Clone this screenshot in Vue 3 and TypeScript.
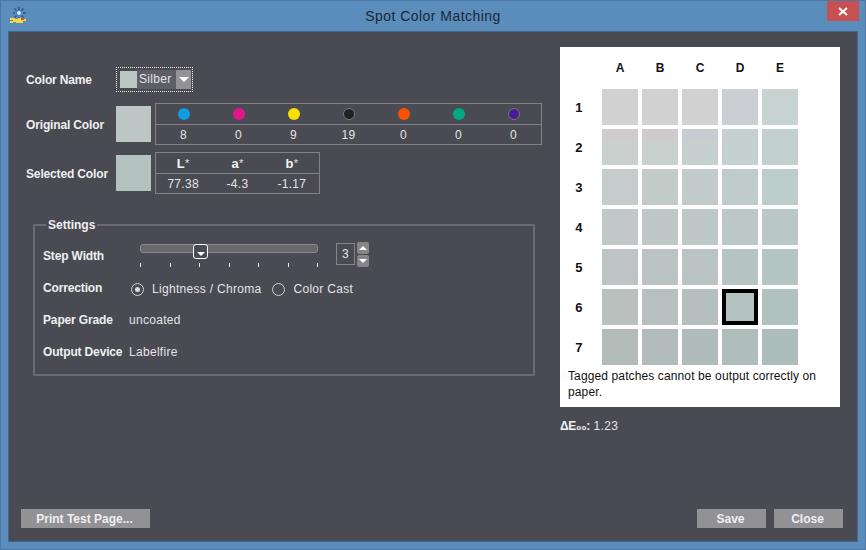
<template>
  <div class="window">
    <header class="titlebar">
      <svg class="app-icon" width="18" height="18" viewBox="0 0 18 18">
        <g stroke="#2f5288" stroke-width="1.4">
          <path d="M10 1v3M10 11v2M4 7h2M14 7h3M5.5 2.5l2 2M14.5 2.5l-2 2M5.5 11.5l2-2M14.5 11.5l-2-2" />
        </g>
        <circle cx="10" cy="7" r="2.6" fill="#cfe8fb" stroke="#3d78b8" />
        <path d="M1 12h5v1h3v-1h5v1h3v2h-3v2H7v-1H4v1H1v-2h3v-1H1z" fill="#f7d93c" />
        <path d="M12 12h3v2h-3z" fill="#d8541e" />
      </svg>
      <span class="title">Spot Color Matching</span>
      <button class="close-x" type="button">
        <svg width="10" height="9" viewBox="0 0 10 9">
          <path d="M1 1l8 7M9 1L1 8" stroke="#fff" stroke-width="2" />
        </svg>
      </button>
    </header>

    <div class="content">
      <div class="main">
        <section class="left">
          <div class="row name-row">
            <span class="label">Color Name</span>
            <div class="combo">
              <span class="combo-swatch"></span>
              <span class="combo-text">Silber</span>
              <span class="combo-arrow"><i class="tri-down"></i></span>
            </div>
          </div>

          <div class="row original-row">
            <span class="label">Original Color</span>
            <span class="swatch original"></span>
            <div class="table inks">
              <div class="cell" v-for="ink in inks" :key="ink.color">
                <span class="dot" :class="{ ring: ink.ring }" :style="{ background: ink.color }"></span>
              </div>
              <div class="cell value" v-for="(ink, i) in inks" :key="i">{{ ink.value }}</div>
            </div>
          </div>

          <div class="row selected-row">
            <span class="label">Selected Color</span>
            <span class="swatch selected"></span>
            <div class="table lab">
              <div class="cell head" v-for="h in labHead" :key="h"><b>{{ h }}</b>*</div>
              <div class="cell value" v-for="v in labValues" :key="v">{{ v }}</div>
            </div>
          </div>

          <fieldset class="settings">
            <legend>Settings</legend>
            <div class="set-row">
              <span class="label">Step Width</span>
              <div class="slider">
                <div class="track">
                  <span class="thumb"><i class="tri-down small"></i></span>
                </div>
                <div class="ticks"><i v-for="n in 7" :key="n"></i></div>
              </div>
              <div class="spinner">
                <span class="spin-value">3</span>
                <div class="spin-buttons">
                  <span class="spin-btn"><i class="tri-up"></i></span>
                  <span class="spin-btn"><i class="tri-down small"></i></span>
                </div>
              </div>
            </div>
            <div class="set-row correction">
              <span class="label">Correction</span>
              <label class="radio first"><span class="radio-mark on"></span>Lightness / Chroma</label>
              <label class="radio"><span class="radio-mark"></span>Color Cast</label>
            </div>
            <div class="set-row">
              <span class="label">Paper Grade</span>
              <span class="text">uncoated</span>
            </div>
            <div class="set-row">
              <span class="label">Output Device</span>
              <span class="text">Labelfire</span>
            </div>
          </fieldset>
        </section>

        <section class="right">
          <div class="panel">
            <div class="grid">
              <span></span>
              <span class="col-head" v-for="c in columns" :key="c">{{ c }}</span>
              <template v-for="(row, r) in patches" :key="r">
                <span class="row-head">{{ r + 1 }}</span>
                <span
                  v-for="(p, c) in row"
                  :key="c"
                  class="patch"
                  :class="{ active: r === 5 && c === 3 }"
                  :style="{ background: patchBg(p) }"
                ></span>
              </template>
            </div>
            <p class="note">Tagged patches cannot be output correctly on paper.</p>
          </div>
          <div class="delta"><b>ΔE₀₀:</b> 1.23</div>
        </section>
      </div>

      <footer class="footer">
        <button class="btn print" type="button">Print Test Page...</button>
        <div class="footer-right">
          <button class="btn" type="button">Save</button>
          <button class="btn" type="button">Close</button>
        </div>
      </footer>
    </div>
  </div>
</template>

<script setup lang="ts">
const inks = [
  { color: '#0f9be0', value: 8 },
  { color: '#e0168a', value: 0 },
  { color: '#f6e100', value: 9 },
  { color: '#222224', value: 19, ring: true },
  { color: '#fb5200', value: 0 },
  { color: '#00ab84', value: 0 },
  { color: '#4a1a9a', value: 0, ring: true },
];

const labHead = ['L', 'a', 'b'];
const labValues = ['77.38', '-4.3', '-1.17'];
const columns = ['A', 'B', 'C', 'D', 'E'];

// a patch is one colour, or "top|bottom" when a tagged strip sits on top
const patches = [
  ['#d2d2d2', '#d2d2d2', '#d2d2d2', '#cbced3', '#c7d3d0'],
  ['#cecccc|#c9d0ce', '#cdcbcb|#c8d1ce', '#c8cbd2|#c6d0ce', '#c5d1ce', '#c2d0ce'],
  ['#c5cccb', '#c3cbc9', '#c2cbc9', '#c0ccca', '#bdcdcb'],
  ['#c1c8c7', '#bfc8c6', '#bdc8c7', '#bbc8c6', '#b9c8c7'],
  ['#bdc4c3', '#bbc4c3', '#b9c4c3', '#b6c5c4', '#b5c5c4'],
  ['#b9c0be', '#b7c0be', '#b5c0be', '#b3c1bf', '#b1c1be'],
  ['#b4bcba', '#b2bcba', '#b0bcba', '#afbdbb', '#adbdbb'],
];

function patchBg(p: string): string {
  const [top, bottom] = p.split('|');
  if (!bottom) return top;
  return `linear-gradient(${top} 11px, ${bottom} 11px)`;
}
</script>

<style scoped>
.window {
  width: 866px;
  height: 550px;
  box-sizing: border-box;
  display: flex;
  flex-direction: column;
  background: #5a8cbc;
  border: 1px solid #4c77a5;
  font-family: "Liberation Sans", Arial, sans-serif;
  font-size: 12px;
  letter-spacing: 0.3px;
  color: #e4e4e6;
}
.titlebar {
  height: 30px;
  flex: none;
  display: flex;
  align-items: flex-start;
  position: relative;
}
.app-icon {
  margin: 5px 0 0 8px;
}
.title {
  position: absolute;
  left: 0;
  right: 0;
  top: 7px;
  text-align: center;
  font-size: 14px;
  letter-spacing: 0.45px;
  color: #1d2733;
}
.close-x {
  margin-left: auto;
  margin-right: 6px;
  width: 32px;
  height: 20px;
  border: none;
  padding: 0;
  background: #c75050;
  display: flex;
  align-items: center;
  justify-content: center;
}
.content {
  flex: 1;
  margin: 0 7px 7px;
  box-sizing: border-box;
  border: 1px solid #43678f;
  background: #4a4a52;
  display: flex;
  flex-direction: column;
  padding: 0 14px 13px 12px;
}
.main {
  flex: 1;
  display: flex;
}
.left {
  width: 539px;
  flex: none;
  padding-top: 35px;
  box-sizing: border-box;
}
.label {
  font-weight: 700;
  color: #efeff0;
  letter-spacing: -0.15px;
}
.row {
  display: flex;
  align-items: center;
  padding-left: 5px;
}
.row .label {
  width: 90px;
  flex: none;
}
.original-row .label,
.selected-row .label {
  padding-top: 2px;
}
.name-row {
  height: 25px;
}
.combo {
  width: 77px;
  height: 25px;
  box-sizing: border-box;
  border: 1px dotted #fff;
  padding: 3px 1px 3px 3px;
  display: flex;
  align-items: center;
}
.combo-swatch {
  width: 17px;
  height: 17px;
  background: #bcc6c4;
  flex: none;
}
.combo-text {
  flex: 1;
  padding-left: 2px;
  background: #5e5e66;
  height: 19px;
  line-height: 19px;
}
.combo-arrow {
  width: 15px;
  height: 19px;
  background: #929297;
  display: flex;
  align-items: center;
  justify-content: center;
  flex: none;
}
.tri-down {
  display: block;
  width: 0;
  height: 0;
  border-left: 5px solid transparent;
  border-right: 5px solid transparent;
  border-top: 5px solid #fff;
}
.tri-down.small {
  border-left-width: 4px;
  border-right-width: 4px;
  border-top-width: 4px;
}
.tri-up {
  display: block;
  width: 0;
  height: 0;
  border-left: 4px solid transparent;
  border-right: 4px solid transparent;
  border-bottom: 4px solid #fff;
}
.swatch {
  width: 35px;
  height: 36px;
  flex: none;
}
.swatch.original {
  background: #bcc6c4;
}
.swatch.selected {
  background: #b3c2be;
}
.original-row {
  margin-top: 11px;
}
.selected-row {
  margin-top: 7px;
}
.table {
  margin-left: 4px;
  border: 1px solid #828286;
  display: grid;
  grid-template-rows: 20px 20px;
  box-sizing: border-box;
}
.inks {
  width: 387px;
  height: 42px;
  grid-template-columns: repeat(7, 1fr);
}
.lab {
  width: 165px;
  height: 42px;
  grid-template-columns: repeat(3, 1fr);
}
.cell {
  display: flex;
  align-items: center;
  justify-content: center;
}
.cell.value {
  border-top: 1px solid #828286;
  height: 20px;
  box-sizing: border-box;
}
.cell.head {
  font-size: 11px;
}
.cell.head b {
  font-size: 13px;
  color: #f4f4f4;
}
.dot {
  width: 12px;
  height: 12px;
  border-radius: 50%;
  box-sizing: border-box;
}
.dot.ring {
  border: 1px solid #77777c;
}
.settings {
  margin: 24px 0 0 12px;
  padding: 0 0 0 8px;
  width: 502px;
  height: 158px;
  box-sizing: border-box;
  border: 2px solid #6b6b73;
}
.settings legend {
  margin-left: 3px;
  padding: 0 2px;
  font-weight: 700;
  letter-spacing: 0;
  color: #efeff0;
}
.set-row {
  height: 32px;
  display: flex;
  align-items: center;
}
.set-row:first-of-type {
  margin-top: 8px;
}
.set-row .label {
  width: 86px;
  flex: none;
}
.slider {
  width: 178px;
  margin: 0 0 0 11px;
  flex: none;
  align-self: flex-start;
}
.track {
  position: relative;
  height: 9px;
  box-sizing: border-box;
  margin-top: 4px;
  border: 1px solid #8a8a8e;
  border-radius: 3px;
  background: #68686d;
}
.thumb {
  position: absolute;
  left: 52px;
  top: -1px;
  width: 15px;
  height: 15px;
  box-sizing: border-box;
  border: 1px solid #fff;
  border-radius: 3px;
  background: #4a4a52;
  display: flex;
  align-items: flex-end;
  justify-content: center;
  padding-bottom: 2px;
}
.ticks {
  display: flex;
  justify-content: space-between;
  margin-top: 10px;
}
.ticks i {
  display: block;
  width: 1px;
  height: 4px;
  background: #e8e8e8;
}
.spinner {
  margin: 0 0 4px 18px;
  display: flex;
  align-items: center;
  gap: 2px;
}
.spin-value {
  width: 19px;
  height: 22px;
  box-sizing: border-box;
  border: 1px solid #85858a;
  display: flex;
  align-items: center;
  justify-content: center;
}
.spin-buttons {
  display: flex;
  flex-direction: column;
  gap: 1px;
}
.spin-btn {
  width: 12px;
  height: 12px;
  background: #85858a;
  border-radius: 2px;
  display: flex;
  align-items: center;
  justify-content: center;
}
.correction .label {
  width: 88px;
}
.radio {
  display: flex;
  align-items: center;
  gap: 8px;
  margin-top: 2px;
}
.radio.first {
  margin-right: 11px;
}
.radio-mark {
  width: 13px;
  height: 13px;
  box-sizing: border-box;
  border: 1px solid #d0d0d2;
  border-radius: 50%;
  display: flex;
  align-items: center;
  justify-content: center;
}
.radio-mark.on::after {
  content: "";
  width: 5px;
  height: 5px;
  border-radius: 50%;
  background: #dcdcde;
}
.right {
  width: 280px;
  flex: none;
  padding-top: 15px;
}
.panel {
  height: 360px;
  box-sizing: border-box;
  background: #fff;
  color: #111;
}
.grid {
  display: grid;
  grid-template-columns: 38px repeat(5, 36px);
  grid-template-rows: 38px repeat(7, 36px);
  gap: 4px;
}
.col-head {
  text-align: center;
  padding-top: 14px;
  font-weight: 700;
  letter-spacing: 0;
}
.row-head {
  display: flex;
  align-items: center;
  justify-content: center;
  font-weight: 700;
  font-size: 13px;
}
.patch {
  box-sizing: border-box;
}
.patch.active {
  border: 4px solid #000;
}
.note {
  margin: 3px 8px 0;
  line-height: 16px;
  letter-spacing: 0.12px;
  color: #111;
}
.delta {
  margin-top: 12px;
  color: #e4e4e6;
}
.delta b {
  color: #f0f0f0;
  letter-spacing: -0.3px;
}
.footer {
  display: flex;
  justify-content: space-between;
  align-items: center;
}
.footer-right {
  display: flex;
  gap: 8px;
}
.btn {
  width: 69px;
  height: 19px;
  border: none;
  padding: 0 2px 0 0;
  background: #919196;
  color: #efeff0;
  font-family: inherit;
  font-size: 12px;
  font-weight: 700;
}
.btn.print {
  width: 129px;
}
</style>

<style>
html,
body {
  margin: 0;
  background: #5a8cbc;
}
</style>
